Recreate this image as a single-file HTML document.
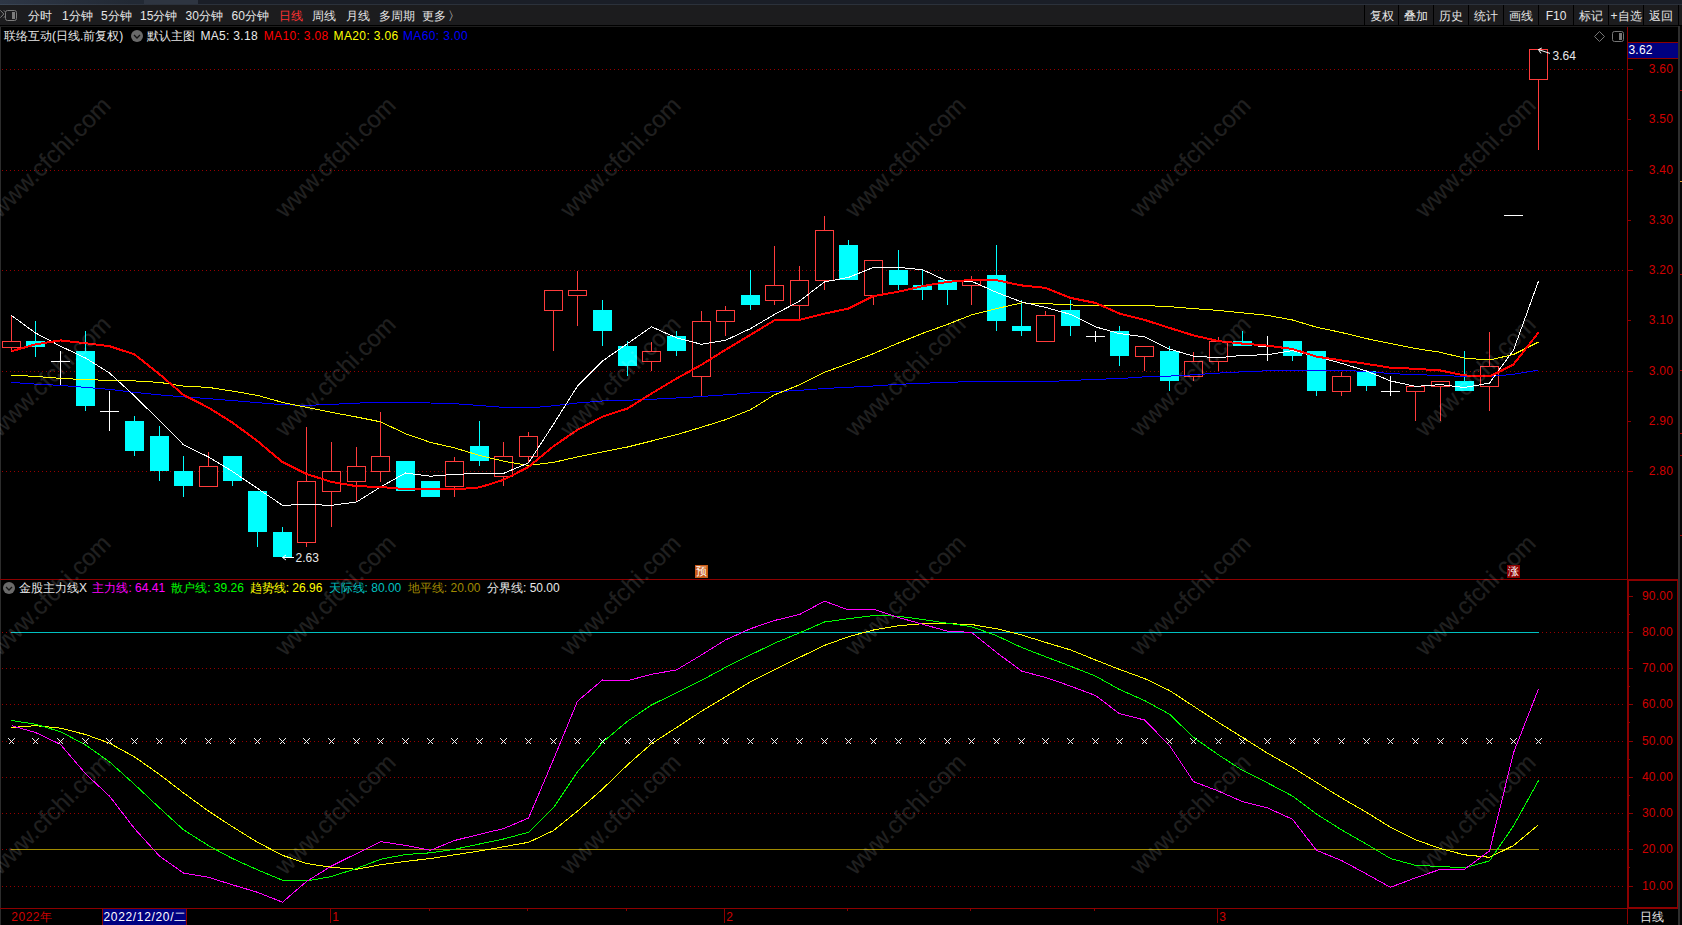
<!DOCTYPE html>
<html><head><meta charset="utf-8"><title>联络互动 日线</title>
<style>
html,body{margin:0;padding:0;background:#000;}
body{width:1682px;height:925px;position:relative;overflow:hidden;font-family:"Liberation Sans",sans-serif;font-size:12px;color:#e4e4e4;}
#topstrip{position:absolute;left:0;top:0;width:1682px;height:5px;background:#1a1e27;box-sizing:border-box}
#topstrip u{position:absolute;left:0;top:4px;width:1682px;height:1px;display:block;background:linear-gradient(90deg,#3a4554,#2b313b 160px)}
#topstrip i{position:absolute;top:0;height:4px;display:block}
#toolbar{position:absolute;left:0;top:5px;width:1682px;height:20px;background:#1c1c1e;border-bottom:1px solid #000;box-shadow:0 1px 0 #1d1d1d}
#rstrip{position:absolute;left:1678px;top:26px;width:4px;height:899px;background:#050505;border-left:2px solid #2e2e2e;box-sizing:border-box}
.t{position:absolute;white-space:nowrap;}
i{font-style:normal;display:inline-block;width:12px;text-align:center;letter-spacing:0}
.tb{height:21px;line-height:21px;color:#e6e6e6}
.tb.sel{color:#ff3232}
.btn{position:absolute;top:5px;padding-top:1px;height:19px;line-height:20px;text-align:center;color:#e6e6e6;border-left:1px solid #000;background:#1c1c1e;white-space:nowrap}
.ti{height:17px;line-height:17px;color:#e8e8e8}
.ti b{font-weight:normal;letter-spacing:0.33px}
.bb{height:17px;line-height:17px}
.ax{position:absolute;left:1628px;width:45px;text-align:right;height:16px;line-height:16px;color:#d00000;letter-spacing:0.2px}
.wm{position:absolute;transform-origin:0 0;transform:rotate(-45deg) translateY(-18.6px);font-size:24px;line-height:24px;color:#fff;-webkit-text-stroke:0.12px #fff;opacity:0.125;white-space:nowrap;pointer-events:none;height:24px;}
#wmwrap{position:absolute;left:0;top:27px;width:1678px;height:898px;overflow:hidden}
#wmwrap .in{position:absolute;left:0;top:-27px}
#cur{position:absolute;left:1628px;top:42px;width:50px;height:17px;box-sizing:border-box;background:#000080;border-top:1px solid #8c0000;border-bottom:1px solid #8c0000;color:#fff;line-height:14px;padding-left:0.5px;letter-spacing:0.2px;font-size:12px}
#datebox{position:absolute;left:102px;top:909px;width:85px;height:16px;box-sizing:border-box;background:#000080;border-left:1px solid #8c0000;border-right:1px solid #8c0000;color:#fff;line-height:16px;padding-left:0.5px;letter-spacing:0.66px;white-space:nowrap}
.mk{position:absolute;top:565px;width:13px;height:13px;font-size:11px;line-height:13px;text-align:center;color:#fff;overflow:hidden}
.dd{position:absolute;width:12px;height:12px;border-radius:6px;background:#6a6a6a}
</style></head>
<body>
<div id="topstrip"><u></u><i style="left:0;width:144px;background:linear-gradient(90deg,#2e3746,#222934 130px)"></i><i style="left:144px;width:54px;background:#2e3541"></i></div>
<div id="toolbar"></div>
<svg style="position:absolute;left:0;top:9px" width="18" height="13" viewBox="0 0 18 13"><path d="M0.3 1.3L3.8 5 0.3 8.7M3.8 1.3L7.4 5 3.8 8.7" fill="none" stroke="#7c7c7c" stroke-width="1"/><rect x="5.5" y="1.5" width="11" height="10" rx="2" fill="#1c1c1e" stroke="#7c7c7c"/><rect x="12" y="3" width="3" height="7" fill="#7c7c7c"/></svg>
<div class="btn" style="left:1364px;width:33px"><i>复</i><i>权</i></div>
<div class="btn" style="left:1398px;width:34px"><i>叠</i><i>加</i></div>
<div class="btn" style="left:1433px;width:34px"><i>历</i><i>史</i></div>
<div class="btn" style="left:1468px;width:34px"><i>统</i><i>计</i></div>
<div class="btn" style="left:1503px;width:34px"><i>画</i><i>线</i></div>
<div class="btn" style="left:1538px;width:34px">F10</div>
<div class="btn" style="left:1573px;width:34px"><i>标</i><i>记</i></div>
<div class="btn" style="left:1608px;width:34px">+<i>自</i><i>选</i></div>
<div class="btn" style="left:1643px;width:34px"><i>返</i><i>回</i></div>
<div class="btn" style="left:1678px;width:0"></div>
<div id="rstrip"></div>
<svg id="chart" width="1682" height="925" viewBox="0 0 1682 925" style="position:absolute;left:0;top:0" shape-rendering="crispEdges">
<line x1="2" y1="69.5" x2="1624" y2="69.5" stroke="#960000" stroke-width="1" stroke-dasharray="1 3"/>
<line x1="2" y1="170.5" x2="1624" y2="170.5" stroke="#960000" stroke-width="1" stroke-dasharray="1 3"/>
<line x1="2" y1="270.5" x2="1624" y2="270.5" stroke="#960000" stroke-width="1" stroke-dasharray="1 3"/>
<line x1="2" y1="371.5" x2="1624" y2="371.5" stroke="#960000" stroke-width="1" stroke-dasharray="1 3"/>
<line x1="2" y1="471.5" x2="1624" y2="471.5" stroke="#960000" stroke-width="1" stroke-dasharray="1 3"/>
<line x1="2" y1="632.5" x2="1624" y2="632.5" stroke="#960000" stroke-width="1" stroke-dasharray="1 3"/>
<line x1="2" y1="668.5" x2="1624" y2="668.5" stroke="#960000" stroke-width="1" stroke-dasharray="1 3"/>
<line x1="2" y1="704.5" x2="1624" y2="704.5" stroke="#960000" stroke-width="1" stroke-dasharray="1 3"/>
<line x1="2" y1="741.5" x2="1624" y2="741.5" stroke="#960000" stroke-width="1" stroke-dasharray="1 3"/>
<line x1="2" y1="777.5" x2="1624" y2="777.5" stroke="#960000" stroke-width="1" stroke-dasharray="1 3"/>
<line x1="2" y1="813.5" x2="1624" y2="813.5" stroke="#960000" stroke-width="1" stroke-dasharray="1 3"/>
<line x1="2" y1="849.5" x2="1624" y2="849.5" stroke="#960000" stroke-width="1" stroke-dasharray="1 3"/>
<line x1="2" y1="886.5" x2="1624" y2="886.5" stroke="#960000" stroke-width="1" stroke-dasharray="1 3"/>
<rect x="0" y="27" width="1" height="898" fill="#2c2c2c"/>
<rect x="1627" y="27" width="1" height="553" fill="#8c0000"/>
<rect x="0" y="579" width="1678" height="1" fill="#8c0000"/>
<rect x="1627" y="579" width="51" height="2" fill="#8c0000"/>
<rect x="1627" y="579" width="2" height="330" fill="#8c0000"/>
<rect x="1677" y="579" width="1" height="330" fill="#8c0000"/>
<rect x="1627" y="907" width="51" height="2" fill="#8c0000"/>
<rect x="0" y="908" width="1678" height="1" fill="#8c0000"/>
<rect x="1627" y="908" width="1" height="16" fill="#8c0000"/>
<rect x="1628" y="69" width="5" height="1" fill="#8c0000"/>
<rect x="1628" y="119" width="3" height="1" fill="#8c0000"/>
<rect x="1628" y="170" width="5" height="1" fill="#8c0000"/>
<rect x="1628" y="220" width="3" height="1" fill="#8c0000"/>
<rect x="1628" y="270" width="5" height="1" fill="#8c0000"/>
<rect x="1628" y="320" width="3" height="1" fill="#8c0000"/>
<rect x="1628" y="371" width="5" height="1" fill="#8c0000"/>
<rect x="1628" y="421" width="3" height="1" fill="#8c0000"/>
<rect x="1628" y="471" width="5" height="1" fill="#8c0000"/>
<rect x="1629" y="596" width="4" height="1" fill="#8c0000"/>
<rect x="1629" y="614" width="1" height="1" fill="#8c0000"/>
<rect x="1629" y="632" width="4" height="1" fill="#8c0000"/>
<rect x="1629" y="650" width="1" height="1" fill="#8c0000"/>
<rect x="1629" y="668" width="4" height="1" fill="#8c0000"/>
<rect x="1629" y="686" width="1" height="1" fill="#8c0000"/>
<rect x="1629" y="704" width="4" height="1" fill="#8c0000"/>
<rect x="1629" y="722" width="1" height="1" fill="#8c0000"/>
<rect x="1629" y="741" width="4" height="1" fill="#8c0000"/>
<rect x="1629" y="759" width="1" height="1" fill="#8c0000"/>
<rect x="1629" y="777" width="4" height="1" fill="#8c0000"/>
<rect x="1629" y="795" width="1" height="1" fill="#8c0000"/>
<rect x="1629" y="813" width="4" height="1" fill="#8c0000"/>
<rect x="1629" y="831" width="1" height="1" fill="#8c0000"/>
<rect x="1629" y="849" width="4" height="1" fill="#8c0000"/>
<rect x="1629" y="867" width="1" height="1" fill="#8c0000"/>
<rect x="1629" y="886" width="4" height="1" fill="#8c0000"/>
<line x1="11" y1="632.5" x2="1539" y2="632.5" stroke="#00c0c0" stroke-width="1"/>
<line x1="11" y1="849.5" x2="1539" y2="849.5" stroke="#a08a00" stroke-width="1"/>
<rect x="11" y="315" width="1" height="26" fill="#ff3c3c"/>
<rect x="11" y="347" width="1" height="5" fill="#ff3c3c"/>
<rect x="2.5" y="341.5" width="18" height="6" fill="#000" stroke="#ff3c3c" stroke-width="1"/>
<rect x="35" y="321" width="1" height="36" fill="#00ffff"/>
<rect x="26" y="341" width="19" height="6" fill="#00ffff"/>
<rect x="60" y="351" width="1" height="35" fill="#ffffff"/>
<rect x="51" y="361" width="19" height="1" fill="#ffffff"/>
<rect x="85" y="331" width="1" height="80" fill="#00ffff"/>
<rect x="76" y="351" width="19" height="55" fill="#00ffff"/>
<rect x="109" y="391" width="1" height="40" fill="#ffffff"/>
<rect x="100" y="411" width="19" height="1" fill="#ffffff"/>
<rect x="134" y="416" width="1" height="40" fill="#00ffff"/>
<rect x="125" y="421" width="19" height="30" fill="#00ffff"/>
<rect x="159" y="426" width="1" height="55" fill="#00ffff"/>
<rect x="150" y="436" width="19" height="35" fill="#00ffff"/>
<rect x="183" y="456" width="1" height="41" fill="#00ffff"/>
<rect x="174" y="471" width="19" height="15" fill="#00ffff"/>
<rect x="208" y="452" width="1" height="14" fill="#ff3c3c"/>
<rect x="199.5" y="466.5" width="18" height="20" fill="#000" stroke="#ff3c3c" stroke-width="1"/>
<rect x="232" y="456" width="1" height="30" fill="#00ffff"/>
<rect x="223" y="456" width="19" height="25" fill="#00ffff"/>
<rect x="257" y="491" width="1" height="56" fill="#00ffff"/>
<rect x="248" y="491" width="19" height="41" fill="#00ffff"/>
<rect x="282" y="527" width="1" height="30" fill="#00ffff"/>
<rect x="273" y="532" width="19" height="25" fill="#00ffff"/>
<rect x="306" y="427" width="1" height="54" fill="#ff3c3c"/>
<rect x="306" y="542" width="1" height="5" fill="#ff3c3c"/>
<rect x="297.5" y="481.5" width="18" height="61" fill="#000" stroke="#ff3c3c" stroke-width="1"/>
<rect x="331" y="442" width="1" height="29" fill="#ff3c3c"/>
<rect x="331" y="491" width="1" height="36" fill="#ff3c3c"/>
<rect x="322.5" y="471.5" width="18" height="20" fill="#000" stroke="#ff3c3c" stroke-width="1"/>
<rect x="356" y="447" width="1" height="19" fill="#ff3c3c"/>
<rect x="356" y="481" width="1" height="21" fill="#ff3c3c"/>
<rect x="347.5" y="466.5" width="18" height="15" fill="#000" stroke="#ff3c3c" stroke-width="1"/>
<rect x="380" y="412" width="1" height="44" fill="#ff3c3c"/>
<rect x="380" y="471" width="1" height="11" fill="#ff3c3c"/>
<rect x="371.5" y="456.5" width="18" height="15" fill="#000" stroke="#ff3c3c" stroke-width="1"/>
<rect x="405" y="461" width="1" height="30" fill="#00ffff"/>
<rect x="396" y="461" width="19" height="30" fill="#00ffff"/>
<rect x="430" y="481" width="1" height="16" fill="#00ffff"/>
<rect x="421" y="481" width="19" height="16" fill="#00ffff"/>
<rect x="454" y="457" width="1" height="4" fill="#ff3c3c"/>
<rect x="454" y="486" width="1" height="11" fill="#ff3c3c"/>
<rect x="445.5" y="461.5" width="18" height="25" fill="#000" stroke="#ff3c3c" stroke-width="1"/>
<rect x="479" y="421" width="1" height="45" fill="#00ffff"/>
<rect x="470" y="446" width="19" height="15" fill="#00ffff"/>
<rect x="503" y="442" width="1" height="14" fill="#ff3c3c"/>
<rect x="503" y="476" width="1" height="10" fill="#ff3c3c"/>
<rect x="494.5" y="456.5" width="18" height="20" fill="#000" stroke="#ff3c3c" stroke-width="1"/>
<rect x="528" y="432" width="1" height="4" fill="#ff3c3c"/>
<rect x="528" y="456" width="1" height="7" fill="#ff3c3c"/>
<rect x="519.5" y="436.5" width="18" height="20" fill="#000" stroke="#ff3c3c" stroke-width="1"/>
<rect x="553" y="310" width="1" height="41" fill="#ff3c3c"/>
<rect x="544.5" y="290.5" width="18" height="20" fill="#000" stroke="#ff3c3c" stroke-width="1"/>
<rect x="577" y="271" width="1" height="19" fill="#ff3c3c"/>
<rect x="577" y="295" width="1" height="31" fill="#ff3c3c"/>
<rect x="568.5" y="290.5" width="18" height="5" fill="#000" stroke="#ff3c3c" stroke-width="1"/>
<rect x="602" y="300" width="1" height="46" fill="#00ffff"/>
<rect x="593" y="310" width="19" height="21" fill="#00ffff"/>
<rect x="627" y="341" width="1" height="35" fill="#00ffff"/>
<rect x="618" y="346" width="19" height="20" fill="#00ffff"/>
<rect x="651" y="342" width="1" height="9" fill="#ff3c3c"/>
<rect x="651" y="361" width="1" height="10" fill="#ff3c3c"/>
<rect x="642.5" y="351.5" width="18" height="10" fill="#000" stroke="#ff3c3c" stroke-width="1"/>
<rect x="676" y="331" width="1" height="25" fill="#00ffff"/>
<rect x="667" y="336" width="19" height="15" fill="#00ffff"/>
<rect x="701" y="311" width="1" height="10" fill="#ff3c3c"/>
<rect x="701" y="376" width="1" height="20" fill="#ff3c3c"/>
<rect x="692.5" y="321.5" width="18" height="55" fill="#000" stroke="#ff3c3c" stroke-width="1"/>
<rect x="725" y="306" width="1" height="4" fill="#ff3c3c"/>
<rect x="725" y="321" width="1" height="15" fill="#ff3c3c"/>
<rect x="716.5" y="310.5" width="18" height="11" fill="#000" stroke="#ff3c3c" stroke-width="1"/>
<rect x="750" y="270" width="1" height="40" fill="#00ffff"/>
<rect x="741" y="295" width="19" height="10" fill="#00ffff"/>
<rect x="774" y="246" width="1" height="39" fill="#ff3c3c"/>
<rect x="774" y="300" width="1" height="5" fill="#ff3c3c"/>
<rect x="765.5" y="285.5" width="18" height="15" fill="#000" stroke="#ff3c3c" stroke-width="1"/>
<rect x="799" y="266" width="1" height="14" fill="#ff3c3c"/>
<rect x="799" y="305" width="1" height="15" fill="#ff3c3c"/>
<rect x="790.5" y="280.5" width="18" height="25" fill="#000" stroke="#ff3c3c" stroke-width="1"/>
<rect x="824" y="216" width="1" height="14" fill="#ff3c3c"/>
<rect x="824" y="280" width="1" height="10" fill="#ff3c3c"/>
<rect x="815.5" y="230.5" width="18" height="50" fill="#000" stroke="#ff3c3c" stroke-width="1"/>
<rect x="848" y="240" width="1" height="40" fill="#00ffff"/>
<rect x="839" y="245" width="19" height="35" fill="#00ffff"/>
<rect x="873" y="295" width="1" height="10" fill="#ff3c3c"/>
<rect x="864.5" y="260.5" width="18" height="35" fill="#000" stroke="#ff3c3c" stroke-width="1"/>
<rect x="898" y="250" width="1" height="40" fill="#00ffff"/>
<rect x="889" y="270" width="19" height="15" fill="#00ffff"/>
<rect x="922" y="270" width="1" height="30" fill="#00ffff"/>
<rect x="913" y="285" width="19" height="5" fill="#00ffff"/>
<rect x="947" y="280" width="1" height="25" fill="#00ffff"/>
<rect x="938" y="280" width="19" height="10" fill="#00ffff"/>
<rect x="971" y="276" width="1" height="4" fill="#ff3c3c"/>
<rect x="971" y="285" width="1" height="20" fill="#ff3c3c"/>
<rect x="962.5" y="280.5" width="18" height="5" fill="#000" stroke="#ff3c3c" stroke-width="1"/>
<rect x="996" y="245" width="1" height="86" fill="#00ffff"/>
<rect x="987" y="275" width="19" height="46" fill="#00ffff"/>
<rect x="1021" y="300" width="1" height="36" fill="#00ffff"/>
<rect x="1012" y="326" width="19" height="5" fill="#00ffff"/>
<rect x="1045" y="311" width="1" height="4" fill="#ff3c3c"/>
<rect x="1036.5" y="315.5" width="18" height="26" fill="#000" stroke="#ff3c3c" stroke-width="1"/>
<rect x="1070" y="300" width="1" height="36" fill="#00ffff"/>
<rect x="1061" y="310" width="19" height="16" fill="#00ffff"/>
<rect x="1095" y="331" width="1" height="11" fill="#ffffff"/>
<rect x="1086" y="336" width="19" height="1" fill="#ffffff"/>
<rect x="1119" y="326" width="1" height="40" fill="#00ffff"/>
<rect x="1110" y="331" width="19" height="25" fill="#00ffff"/>
<rect x="1144" y="356" width="1" height="15" fill="#ff3c3c"/>
<rect x="1135.5" y="346.5" width="18" height="10" fill="#000" stroke="#ff3c3c" stroke-width="1"/>
<rect x="1169" y="346" width="1" height="45" fill="#00ffff"/>
<rect x="1160" y="351" width="19" height="30" fill="#00ffff"/>
<rect x="1193" y="352" width="1" height="9" fill="#ff3c3c"/>
<rect x="1193" y="376" width="1" height="5" fill="#ff3c3c"/>
<rect x="1184.5" y="361.5" width="18" height="15" fill="#000" stroke="#ff3c3c" stroke-width="1"/>
<rect x="1218" y="337" width="1" height="4" fill="#ff3c3c"/>
<rect x="1218" y="361" width="1" height="10" fill="#ff3c3c"/>
<rect x="1209.5" y="341.5" width="18" height="20" fill="#000" stroke="#ff3c3c" stroke-width="1"/>
<rect x="1242" y="331" width="1" height="15" fill="#00ffff"/>
<rect x="1233" y="341" width="19" height="5" fill="#00ffff"/>
<rect x="1267" y="336" width="1" height="25" fill="#ffffff"/>
<rect x="1258" y="346" width="19" height="1" fill="#ffffff"/>
<rect x="1292" y="341" width="1" height="20" fill="#00ffff"/>
<rect x="1283" y="341" width="19" height="15" fill="#00ffff"/>
<rect x="1316" y="351" width="1" height="45" fill="#00ffff"/>
<rect x="1307" y="351" width="19" height="40" fill="#00ffff"/>
<rect x="1341" y="372" width="1" height="4" fill="#ff3c3c"/>
<rect x="1341" y="391" width="1" height="5" fill="#ff3c3c"/>
<rect x="1332.5" y="376.5" width="18" height="15" fill="#000" stroke="#ff3c3c" stroke-width="1"/>
<rect x="1366" y="371" width="1" height="20" fill="#00ffff"/>
<rect x="1357" y="371" width="19" height="15" fill="#00ffff"/>
<rect x="1390" y="376" width="1" height="20" fill="#ffffff"/>
<rect x="1381" y="391" width="19" height="1" fill="#ffffff"/>
<rect x="1415" y="391" width="1" height="30" fill="#ff3c3c"/>
<rect x="1406.5" y="386.5" width="18" height="5" fill="#000" stroke="#ff3c3c" stroke-width="1"/>
<rect x="1440" y="386" width="1" height="35" fill="#ff3c3c"/>
<rect x="1431.5" y="381.5" width="18" height="5" fill="#000" stroke="#ff3c3c" stroke-width="1"/>
<rect x="1464" y="351" width="1" height="40" fill="#00ffff"/>
<rect x="1455" y="381" width="19" height="10" fill="#00ffff"/>
<rect x="1489" y="332" width="1" height="34" fill="#ff3c3c"/>
<rect x="1489" y="386" width="1" height="25" fill="#ff3c3c"/>
<rect x="1480.5" y="366.5" width="18" height="20" fill="#000" stroke="#ff3c3c" stroke-width="1"/>
<rect x="1504" y="215" width="19" height="1" fill="#ffffff"/>
<rect x="1538" y="79" width="1" height="71" fill="#ff3c3c"/>
<rect x="1529.5" y="49.5" width="18" height="30" fill="#000" stroke="#ff3c3c" stroke-width="1"/>
<polyline points="11.5,382.4 35.5,384.1 60.5,385.4 85.5,387.4 109.5,389.4 134.5,392.4 159.5,394.9 183.5,396.9 208.5,398.6 232.5,400.6 257.5,402.6 282.5,404.7 306.5,405.4 331.5,404.4 356.5,403.1 380.5,402.4 405.5,402.6 430.5,403 454.5,403.7 479.5,405.5 503.5,407.4 528.5,408 553.5,405.8 577.5,403 602.5,401 627.5,400.2 651.5,399.3 676.5,398 701.5,396.5 725.5,394.8 750.5,393 774.5,391.8 799.5,390.3 824.5,388.5 848.5,387.3 873.5,386 898.5,384.3 922.5,383.3 947.5,382.3 971.5,381.6 996.5,381.6 1021.5,381.6 1045.5,381.6 1070.5,380.5 1095.5,379.3 1119.5,378.6 1144.5,376.8 1169.5,376.1 1193.5,374.8 1218.5,373.1 1242.5,371.8 1267.5,370.8 1292.5,370.4 1316.5,370.5 1341.5,370.5 1366.5,371.4 1390.5,373.6 1415.5,374.7 1440.5,375.4 1464.5,376.5 1489.5,376.5 1513.5,374.3 1538.5,370" fill="none" stroke="#0000ff" stroke-width="1" stroke-linejoin="round"/>
<polyline points="11.5,375.2 35.5,376.4 60.5,378.4 85.5,379.6 109.5,380.4 134.5,380.9 159.5,382.4 183.5,386.1 208.5,387.4 232.5,391.1 257.5,395.4 282.5,402.4 306.5,407.4 331.5,412.4 356.5,417 380.5,421.8 405.5,433.7 430.5,442.4 454.5,447.9 479.5,455.4 503.5,461.2 528.5,465.4 553.5,462.4 577.5,456.9 602.5,451.9 627.5,447 651.5,441 676.5,434.7 701.5,427.2 725.5,419.7 750.5,409.7 774.5,394.8 799.5,384.8 824.5,372.3 848.5,363.5 873.5,353.6 898.5,343 922.5,333.4 947.5,324.4 971.5,314.9 996.5,308.6 1021.5,302.9 1045.5,303.6 1070.5,304.9 1095.5,305.9 1119.5,305.6 1144.5,305.6 1169.5,306.6 1193.5,308.6 1218.5,310.4 1242.5,312.9 1267.5,315.4 1292.5,320 1316.5,327.2 1341.5,332.5 1366.5,338.6 1390.5,343.5 1415.5,348.5 1440.5,352.3 1464.5,358.2 1489.5,360 1513.5,354.5 1538.5,342" fill="none" stroke="#ffff00" stroke-width="1" stroke-linejoin="round"/>
<polyline points="11.5,315.5 35.5,333 60.5,346.2 85.5,358 109.5,373 134.5,396 159.5,420.6 183.5,444.8 208.5,457 232.5,471.5 257.5,488.4 282.5,505.3 306.5,504.5 331.5,505.3 356.5,502 380.5,487 405.5,473 430.5,476.2 454.5,474.4 479.5,473.4 503.5,473.4 528.5,462.9 553.5,424.2 577.5,386 602.5,361 627.5,343.6 651.5,326.8 676.5,337.8 701.5,344.3 725.5,340.3 750.5,328.6 774.5,314.4 799.5,301.1 824.5,281.9 848.5,277.4 873.5,267.4 898.5,267.4 922.5,269.7 947.5,281.2 971.5,281.2 996.5,292.4 1021.5,301.9 1045.5,307.4 1070.5,314.4 1095.5,326.9 1119.5,333.6 1144.5,336.9 1169.5,349.1 1193.5,356.1 1218.5,357.8 1242.5,355.3 1267.5,354.8 1292.5,350.5 1316.5,356.5 1341.5,363.3 1366.5,371 1390.5,380.9 1415.5,386.4 1440.5,384.6 1464.5,387.5 1489.5,383.1 1513.5,350.1 1538.5,281.2" fill="none" stroke="#ffffff" stroke-width="1" stroke-linejoin="round"/>
<polyline points="11.5,351.2 35.5,344.4 60.5,340.4 85.5,343.2 109.5,346.2 134.5,354.4 159.5,374.2 183.5,394.9 208.5,407.7 232.5,422.6 257.5,441.1 282.5,462.1 306.5,474 331.5,481.9 356.5,486.2 380.5,486.9 405.5,489.2 430.5,489.4 454.5,489.4 479.5,487.4 503.5,479.9 528.5,466.9 553.5,446.2 577.5,429.8 602.5,416.7 627.5,408.5 651.5,393.5 676.5,378.5 701.5,364.8 725.5,349.8 750.5,334.8 774.5,320.3 799.5,319.9 824.5,313.6 848.5,308.6 873.5,296.1 898.5,291.7 922.5,286.2 947.5,281.9 971.5,279.9 996.5,280.2 1021.5,285.4 1045.5,287.9 1070.5,297.9 1095.5,302.9 1119.5,313.6 1144.5,319.9 1169.5,327.9 1193.5,335.4 1218.5,341.1 1242.5,343.6 1267.5,345.6 1292.5,349 1316.5,356.6 1341.5,360.4 1366.5,363.9 1390.5,367.7 1415.5,368.8 1440.5,370.5 1464.5,375.4 1489.5,376.5 1513.5,364.4 1538.5,332.5" fill="none" stroke="#ff0000" stroke-width="2" stroke-linejoin="round"/>
<polyline points="11.5,727.5 35.5,725.7 60.5,728.2 85.5,734.5 109.5,743.2 134.5,756.9 159.5,774.4 183.5,792.9 208.5,811.1 232.5,826.8 257.5,842.3 282.5,855.3 306.5,863.5 331.5,867.3 356.5,869.3 380.5,864.8 405.5,861.4 430.5,858.5 454.5,854.8 479.5,851 503.5,846.8 528.5,842.3 553.5,830.6 577.5,811.1 602.5,789.1 627.5,764.9 651.5,743.7 676.5,727.6 701.5,711.2 725.5,696.8 750.5,681.8 774.5,669.9 799.5,657.4 824.5,645.4 848.5,636.7 873.5,630 898.5,625.7 922.5,623.7 947.5,623.7 971.5,624.5 996.5,628.7 1021.5,634.9 1045.5,642.4 1070.5,649.9 1095.5,660 1119.5,669.4 1144.5,678.5 1169.5,690.5 1193.5,706.2 1218.5,722.5 1242.5,737.4 1267.5,753.2 1292.5,767.4 1316.5,782.4 1341.5,797.9 1366.5,812.3 1390.5,827.3 1415.5,839.8 1440.5,848.6 1464.5,854.8 1489.5,857.3 1513.5,845.6 1538.5,824.7" fill="none" stroke="#ffff00" stroke-width="1" stroke-linejoin="round"/>
<polyline points="11.5,720.5 35.5,724.2 60.5,731.7 85.5,744.9 109.5,761.9 134.5,784.4 159.5,807.9 183.5,829.8 208.5,845.6 232.5,858.6 257.5,869.8 282.5,880.3 306.5,881 331.5,876.5 356.5,868.5 380.5,859.3 405.5,854.5 430.5,852.8 454.5,849.3 479.5,844 503.5,839 528.5,832.3 553.5,807.8 577.5,771.9 602.5,742.4 627.5,721.2 651.5,705 676.5,692.7 701.5,680.4 725.5,667.4 750.5,654.9 774.5,643.2 799.5,632.9 824.5,622 848.5,618.7 873.5,615.5 898.5,616.2 922.5,619.5 947.5,623.2 971.5,626.7 996.5,635.7 1021.5,647.4 1045.5,656.7 1070.5,666.2 1095.5,676.1 1119.5,689.5 1144.5,700.5 1169.5,714.2 1193.5,737.4 1218.5,754.9 1242.5,770.4 1267.5,782.9 1292.5,796.1 1316.5,814.1 1341.5,829.8 1366.5,844.1 1390.5,858.5 1415.5,865.3 1440.5,866.5 1464.5,867.8 1489.5,860.9 1513.5,825.9 1538.5,780.5" fill="none" stroke="#00ff00" stroke-width="1" stroke-linejoin="round"/>
<polyline points="11.5,725.7 35.5,732.5 60.5,744.4 85.5,773.7 109.5,796.1 134.5,828.6 159.5,856.1 183.5,873 208.5,877.3 232.5,884.8 257.5,892.3 282.5,902.2 306.5,881.5 331.5,866 356.5,853.6 380.5,841.6 405.5,845.4 430.5,850.3 454.5,840.5 479.5,834.3 503.5,828.6 528.5,818.1 553.5,759.4 577.5,701.2 602.5,680 627.5,680.7 651.5,674.3 676.5,669.9 701.5,654.9 725.5,639.9 750.5,628.7 774.5,620.5 799.5,614.5 824.5,601.2 848.5,610 873.5,609.2 898.5,617.5 922.5,624.2 947.5,631.2 971.5,632.4 996.5,652.4 1021.5,671.1 1045.5,677.4 1070.5,686.1 1095.5,695.5 1119.5,713.7 1144.5,720 1169.5,745.4 1193.5,781.6 1218.5,791.1 1242.5,801.6 1267.5,807.9 1292.5,819.3 1316.5,850.3 1341.5,860.5 1366.5,874 1390.5,887.3 1415.5,877.8 1440.5,869.3 1464.5,869.3 1489.5,850.9 1513.5,752.8 1538.5,689" fill="none" stroke="#ff00ff" stroke-width="1" stroke-linejoin="round"/>
<defs><path id="xm" d="M-3 -3h1v1h-1zM-2 -2h1v1h-1zM-1 -1h1v1h-1zM0 0h1v1h-1zM1 1h1v1h-1zM2 2h1v1h-1zM3 -3h1v1h-1zM2 -2h1v1h-1zM1 -1h1v1h-1zM-1 1h1v1h-1zM-2 2h1v1h-1z" fill="#f4f4f4"/></defs>
<use href="#xm" x="11" y="741"/>
<use href="#xm" x="35" y="741"/>
<use href="#xm" x="60" y="741"/>
<use href="#xm" x="85" y="741"/>
<use href="#xm" x="109" y="741"/>
<use href="#xm" x="134" y="741"/>
<use href="#xm" x="159" y="741"/>
<use href="#xm" x="183" y="741"/>
<use href="#xm" x="208" y="741"/>
<use href="#xm" x="232" y="741"/>
<use href="#xm" x="257" y="741"/>
<use href="#xm" x="282" y="741"/>
<use href="#xm" x="306" y="741"/>
<use href="#xm" x="331" y="741"/>
<use href="#xm" x="356" y="741"/>
<use href="#xm" x="380" y="741"/>
<use href="#xm" x="405" y="741"/>
<use href="#xm" x="430" y="741"/>
<use href="#xm" x="454" y="741"/>
<use href="#xm" x="479" y="741"/>
<use href="#xm" x="503" y="741"/>
<use href="#xm" x="528" y="741"/>
<use href="#xm" x="553" y="741"/>
<use href="#xm" x="577" y="741"/>
<use href="#xm" x="602" y="741"/>
<use href="#xm" x="627" y="741"/>
<use href="#xm" x="651" y="741"/>
<use href="#xm" x="676" y="741"/>
<use href="#xm" x="701" y="741"/>
<use href="#xm" x="725" y="741"/>
<use href="#xm" x="750" y="741"/>
<use href="#xm" x="774" y="741"/>
<use href="#xm" x="799" y="741"/>
<use href="#xm" x="824" y="741"/>
<use href="#xm" x="848" y="741"/>
<use href="#xm" x="873" y="741"/>
<use href="#xm" x="898" y="741"/>
<use href="#xm" x="922" y="741"/>
<use href="#xm" x="947" y="741"/>
<use href="#xm" x="971" y="741"/>
<use href="#xm" x="996" y="741"/>
<use href="#xm" x="1021" y="741"/>
<use href="#xm" x="1045" y="741"/>
<use href="#xm" x="1070" y="741"/>
<use href="#xm" x="1095" y="741"/>
<use href="#xm" x="1119" y="741"/>
<use href="#xm" x="1144" y="741"/>
<use href="#xm" x="1169" y="741"/>
<use href="#xm" x="1193" y="741"/>
<use href="#xm" x="1218" y="741"/>
<use href="#xm" x="1242" y="741"/>
<use href="#xm" x="1267" y="741"/>
<use href="#xm" x="1292" y="741"/>
<use href="#xm" x="1316" y="741"/>
<use href="#xm" x="1341" y="741"/>
<use href="#xm" x="1366" y="741"/>
<use href="#xm" x="1390" y="741"/>
<use href="#xm" x="1415" y="741"/>
<use href="#xm" x="1440" y="741"/>
<use href="#xm" x="1464" y="741"/>
<use href="#xm" x="1489" y="741"/>
<use href="#xm" x="1513" y="741"/>
<use href="#xm" x="1538" y="741"/>
<rect x="429" y="909" width="1" height="2" fill="#8c0000"/>
<rect x="527" y="909" width="1" height="2" fill="#8c0000"/>
<rect x="626" y="909" width="1" height="2" fill="#8c0000"/>
<rect x="847" y="909" width="1" height="2" fill="#8c0000"/>
<rect x="970" y="909" width="1" height="2" fill="#8c0000"/>
<rect x="1094" y="909" width="1" height="2" fill="#8c0000"/>
<rect x="330" y="909" width="1" height="14" fill="#8c0000"/>
<rect x="724" y="909" width="1" height="14" fill="#8c0000"/>
<rect x="1217" y="909" width="1" height="14" fill="#8c0000"/>
</svg>
<div id="wmwrap"><div class="in">
<div class="wm" style="left:-285.9px;top:-1.1px">www.cfchi.com</div>
<div class="wm" style="left:-0.9px;top:-1.1px">www.cfchi.com</div>
<div class="wm" style="left:284.1px;top:-1.1px">www.cfchi.com</div>
<div class="wm" style="left:569.1px;top:-1.1px">www.cfchi.com</div>
<div class="wm" style="left:854.1px;top:-1.1px">www.cfchi.com</div>
<div class="wm" style="left:1139.1px;top:-1.1px">www.cfchi.com</div>
<div class="wm" style="left:1424.1px;top:-1.1px">www.cfchi.com</div>
<div class="wm" style="left:-285.9px;top:218px">www.cfchi.com</div>
<div class="wm" style="left:-0.9px;top:218px">www.cfchi.com</div>
<div class="wm" style="left:284.1px;top:218px">www.cfchi.com</div>
<div class="wm" style="left:569.1px;top:218px">www.cfchi.com</div>
<div class="wm" style="left:854.1px;top:218px">www.cfchi.com</div>
<div class="wm" style="left:1139.1px;top:218px">www.cfchi.com</div>
<div class="wm" style="left:1424.1px;top:218px">www.cfchi.com</div>
<div class="wm" style="left:-285.9px;top:437.1px">www.cfchi.com</div>
<div class="wm" style="left:-0.9px;top:437.1px">www.cfchi.com</div>
<div class="wm" style="left:284.1px;top:437.1px">www.cfchi.com</div>
<div class="wm" style="left:569.1px;top:437.1px">www.cfchi.com</div>
<div class="wm" style="left:854.1px;top:437.1px">www.cfchi.com</div>
<div class="wm" style="left:1139.1px;top:437.1px">www.cfchi.com</div>
<div class="wm" style="left:1424.1px;top:437.1px">www.cfchi.com</div>
<div class="wm" style="left:-285.9px;top:656.1px">www.cfchi.com</div>
<div class="wm" style="left:-0.9px;top:656.1px">www.cfchi.com</div>
<div class="wm" style="left:284.1px;top:656.1px">www.cfchi.com</div>
<div class="wm" style="left:569.1px;top:656.1px">www.cfchi.com</div>
<div class="wm" style="left:854.1px;top:656.1px">www.cfchi.com</div>
<div class="wm" style="left:1139.1px;top:656.1px">www.cfchi.com</div>
<div class="wm" style="left:1424.1px;top:656.1px">www.cfchi.com</div>
<div class="wm" style="left:-285.9px;top:875.2px">www.cfchi.com</div>
<div class="wm" style="left:-0.9px;top:875.2px">www.cfchi.com</div>
<div class="wm" style="left:284.1px;top:875.2px">www.cfchi.com</div>
<div class="wm" style="left:569.1px;top:875.2px">www.cfchi.com</div>
<div class="wm" style="left:854.1px;top:875.2px">www.cfchi.com</div>
<div class="wm" style="left:1139.1px;top:875.2px">www.cfchi.com</div>
<div class="wm" style="left:1424.1px;top:875.2px">www.cfchi.com</div>
</div></div>
<div class="dd" style="left:131px;top:30px"></div>
<svg style="position:absolute;left:131px;top:30px" width="12" height="12"><path d="M3 5l3 3 3-3" fill="none" stroke="#151515" stroke-width="1.3"/></svg>
<div class="dd" style="left:3px;top:582px"></div>
<svg style="position:absolute;left:3px;top:582px" width="12" height="12"><path d="M3 5l3 3 3-3" fill="none" stroke="#151515" stroke-width="1.3"/></svg>
<svg style="position:absolute;left:1592px;top:29px" width="34" height="15"><path d="M7.5 2.5l5 5-5 5-5-5z" fill="none" stroke="#757575"/><rect x="20.5" y="2.5" width="11" height="10" rx="2" fill="none" stroke="#757575"/><rect x="27" y="4" width="3" height="7" fill="#757575"/></svg>
<svg style="position:absolute;left:1536px;top:46px" width="20" height="12"><path d="M2.5 3.6L14 7.4M2.5 3.6l3.3-1.6M2.5 3.6l2.4 3.8" fill="none" stroke="#fff" stroke-width="1"/></svg>
<svg style="position:absolute;left:281px;top:552px" width="16" height="12"><path d="M1.5 5.5H13M1.5 5.5l3.5-2.5M1.5 5.5l3.5 2.5" fill="none" stroke="#fff" stroke-width="1"/></svg>
<div id="cur">3.62</div>
<div id="datebox">2022/12/20/<i>二</i></div>
<div class="mk" style="left:695px;background:#c85a16">预</div>
<div class="mk" style="left:1507px;background:#8b0000">涨</div>
<div class="t tb " style="left:28px;top:6px;"><i>分</i><i>时</i></div>
<div class="t tb " style="left:62px;top:6px;">1<i>分</i><i>钟</i></div>
<div class="t tb " style="left:101px;top:6px;">5<i>分</i><i>钟</i></div>
<div class="t tb " style="left:140px;top:6px;">15<i>分</i><i>钟</i></div>
<div class="t tb " style="left:185.5px;top:6px;">30<i>分</i><i>钟</i></div>
<div class="t tb " style="left:231.5px;top:6px;">60<i>分</i><i>钟</i></div>
<div class="t tb sel" style="left:279px;top:6px;"><i>日</i><i>线</i></div>
<div class="t tb " style="left:312px;top:6px;"><i>周</i><i>线</i></div>
<div class="t tb " style="left:346px;top:6px;"><i>月</i><i>线</i></div>
<div class="t tb " style="left:379px;top:6px;"><i>多</i><i>周</i><i>期</i></div>
<div class="t tb " style="left:422px;top:6px;"><i>更</i><i>多</i></div>
<div class="t tb " style="left:448px;top:6px;"><i>〉</i></div>
<div class="t ti" style="left:4px;top:27.5px;"><i>联</i><i>络</i><i>互</i><i>动</i>(<i>日</i><i>线</i>.<i>前</i><i>复</i><i>权</i>)</div>
<div class="t ti" style="left:147px;top:27.5px;"><i>默</i><i>认</i><i>主</i><i>图</i></div>
<div class="t ti" style="left:200.5px;top:27.5px;letter-spacing:0.3px">MA5: 3.18</div>
<div class="t ti" style="left:263.7px;top:27.5px;color:#ff0000;letter-spacing:0.36px">MA10: 3.08</div>
<div class="t ti" style="left:333.6px;top:27.5px;color:#ffff00;letter-spacing:0.36px">MA20: 3.06</div>
<div class="t ti" style="left:403px;top:27.5px;color:#0000ff;letter-spacing:0.36px">MA60: 3.00</div>
<div class="t ti" style="left:19px;top:580px;"><i>金</i><i>股</i><i>主</i><i>力</i><i>线</i>X</div>
<div class="t ti" style="left:92.4px;top:580px;color:#ff00ff"><i>主</i><i>力</i><i>线</i>: 64.41</div>
<div class="t ti" style="left:171.2px;top:580px;color:#00ff00"><i>散</i><i>户</i><i>线</i>: 39.26</div>
<div class="t ti" style="left:249.7px;top:580px;color:#ffff00"><i>趋</i><i>势</i><i>线</i>: 26.96</div>
<div class="t ti" style="left:328.6px;top:580px;color:#00c0c0"><i>天</i><i>际</i><i>线</i>: 80.00</div>
<div class="t ti" style="left:407.8px;top:580px;color:#a08a00"><i>地</i><i>平</i><i>线</i>: 20.00</div>
<div class="t ti" style="left:487px;top:580px;"><i>分</i><i>界</i><i>线</i>: 50.00</div>
<div class="ax" style="top:61px">3.60</div>
<div class="ax" style="top:111px">3.50</div>
<div class="ax" style="top:162px">3.40</div>
<div class="ax" style="top:212px">3.30</div>
<div class="ax" style="top:262px">3.20</div>
<div class="ax" style="top:312px">3.10</div>
<div class="ax" style="top:363px">3.00</div>
<div class="ax" style="top:413px">2.90</div>
<div class="ax" style="top:463px">2.80</div>
<div class="ax" style="top:588px">90.00</div>
<div class="ax" style="top:624px">80.00</div>
<div class="ax" style="top:660px">70.00</div>
<div class="ax" style="top:696px">60.00</div>
<div class="ax" style="top:733px">50.00</div>
<div class="ax" style="top:769px">40.00</div>
<div class="ax" style="top:805px">30.00</div>
<div class="ax" style="top:841px">20.00</div>
<div class="ax" style="top:878px">10.00</div>
<div class="t ti" style="left:1552.5px;top:48px;">3.64</div>
<div class="t ti" style="left:295.5px;top:550px;">2.63</div>
<div class="t bb" style="left:11.3px;top:908.5px;letter-spacing:0.5px;color:#d00000">2022<i>年</i></div>
<div class="t bb" style="left:332.3px;top:908.5px;color:#d00000">1</div>
<div class="t bb" style="left:726.3px;top:908.5px;color:#d00000">2</div>
<div class="t bb" style="left:1219.3px;top:908.5px;color:#d00000">3</div>
<div class="t bb" style="left:1640px;top:908.5px;color:#e8e8e8"><i>日</i><i>线</i></div>
<svg width="1682" height="925" style="position:absolute;left:0;top:0" shape-rendering="crispEdges"><rect x="1680" y="90" width="2" height="1" fill="#a00000"/><rect x="1680" y="181" width="2" height="1" fill="#e09a30"/><rect x="1680" y="274" width="2" height="1" fill="#a00000"/><rect x="1680" y="370" width="2" height="1" fill="#a00000"/><rect x="1680" y="433" width="2" height="1" fill="#a00000"/><rect x="1680" y="455" width="2" height="1" fill="#a00000"/><rect x="1680" y="535" width="2" height="1" fill="#a00000"/></svg>
</body></html>
